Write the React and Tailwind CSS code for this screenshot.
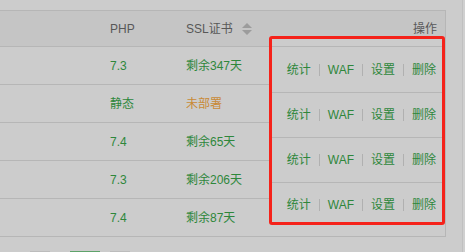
import React from "react";

const rows = [
  { php: "7.3", ssl: "剩余347天", warn: false },
  { php: "静态", ssl: "未部署", warn: true },
  { php: "7.4", ssl: "剩余65天", warn: false },
  { php: "7.3", ssl: "剩余206天", warn: false },
  { php: "7.4", ssl: "剩余87天", warn: false },
];

const SortIcon = () => (
  <svg width="10" height="12" viewBox="0 0 10 12" className="ml-[9px]">
    <path d="M5 0 L10 5 L0 5 Z" fill="#9c9c9c" />
    <path d="M0 7 L10 7 L5 12 Z" fill="#9c9c9c" />
  </svg>
);

const Actions = () => (
  <div className="flex items-center gap-[8px] text-[12px] text-[#2e873b]">
    <span>统计</span>
    <span className="w-px h-[12px] bg-[#b0b0b0]" />
    <span>WAF</span>
    <span className="w-px h-[12px] bg-[#b0b0b0]" />
    <span>设置</span>
    <span className="w-px h-[12px] bg-[#b0b0b0]" />
    <span>删除</span>
  </div>
);

export default function App() {
  return (
    <div
      className="relative w-[465px] h-[252px] overflow-hidden bg-[#cccccc]"
      style={{ fontFamily: '"Liberation Sans", "Noto Sans CJK SC", sans-serif' }}
    >
      <div className="flex h-full">
        {/* Table */}
        <div className="w-[446px] pt-[10px]">
          <div className="border-t border-r border-[#b6b6b6]">
            <div className="flex items-center h-[36px] bg-[#c5c5c5] border-b border-[#b6b6b6] text-[12px] text-[#585858]">
              <div className="w-[110px]" />
              <div className="w-[76px]">PHP</div>
              <div className="flex-1 flex items-center">
                SSL证书
                <SortIcon />
              </div>
              <div className="pr-[8px]">操作</div>
            </div>
            {rows.map((r, i) => (
              <div
                key={i}
                className="flex items-center h-[38px] border-b border-[#b6b6b6] text-[12px] text-[#2e873b]"
              >
                <div className="w-[110px]" />
                <div className="w-[76px]">{r.php}</div>
                <div className={r.warn ? "text-[#c98a36]" : ""}>{r.ssl}</div>
              </div>
            ))}
          </div>
          {/* Pagination peeking in at the bottom */}
          <div className="flex mt-[14px] pl-[30px] gap-[20px]">
            <div className="w-[20px] h-[24px] border-t border-[#bcbcbc] bg-[#cacaca]" />
            <div className="w-[30px] h-[24px] border-t border-[#5fa36b] bg-[#5fa36b]" />
            <div className="w-[20px] h-[24px] border-t border-[#bcbcbc] bg-[#cacaca] -ml-[10px]" />
          </div>
        </div>
        <div className="w-[16px]" />
        <div className="w-px bg-[#c0c0c0]" />
        <div className="flex-1 bg-[#d0d0d0]" />
      </div>

      {/* Highlighted action column */}
      <div className="absolute left-[269px] top-[36px] w-[176px] h-[189px] border-[3px] border-[#f5221a] rounded-[3px] bg-[#cccccc] overflow-hidden">
        <div className="h-[7px]" />
        {[0, 1, 2, 3].map((i) => (
          <div
            key={i}
            className={`flex items-center justify-end pr-[6px] border-t border-[#b6b6b6] ${
              i === 0 ? "h-[46px]" : "h-[45px]"
            }`}
          >
            <Actions />
          </div>
        ))}
      </div>
    </div>
  );
}
